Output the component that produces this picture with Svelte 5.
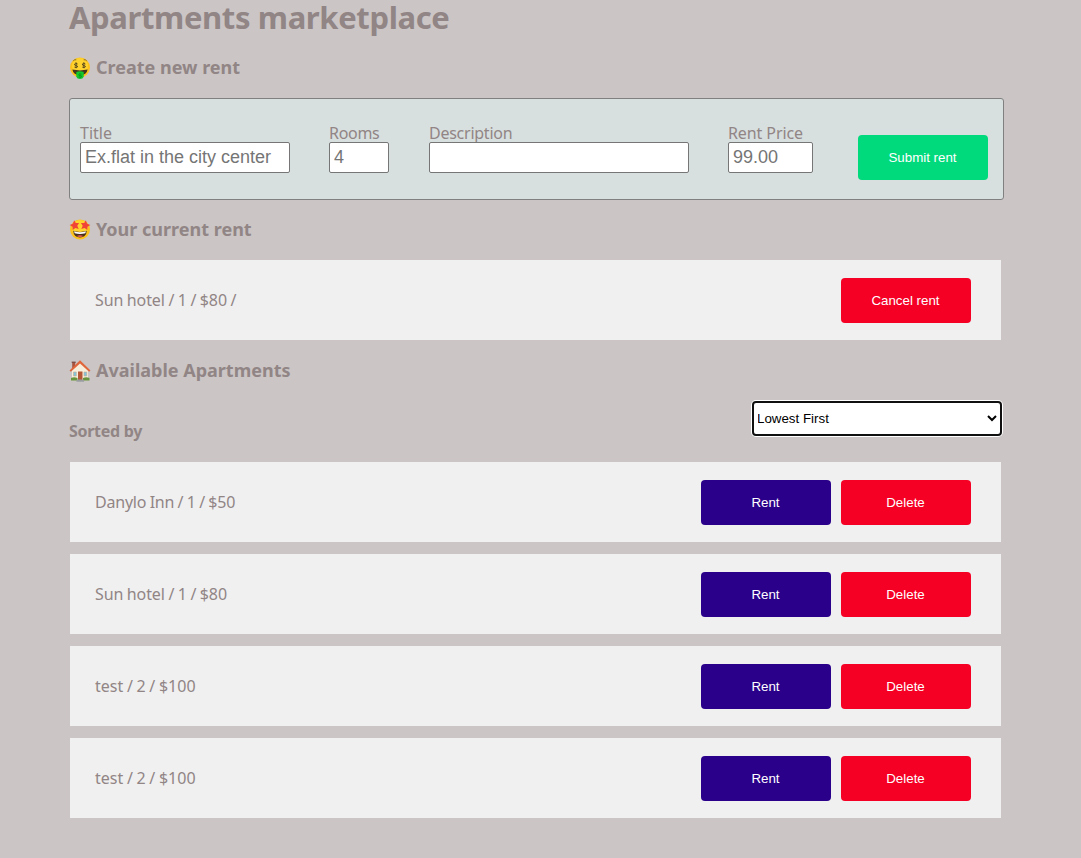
<script>
  const apartments = [
    { name: 'Danylo Inn', rooms: 1, price: 50, tracking: -0.22 },
    { name: 'Sun hotel', rooms: 1, price: 80, tracking: -0.1 },
    { name: 'test', rooms: 2, price: 100, tracking: 0 },
    { name: 'test', rooms: 2, price: 100, tracking: 0 }
  ];
</script>

<main>
  <h1>Apartments marketplace</h1>

  <h2>
    <svg class="emoji" viewBox="0 0 22 22" aria-hidden="true">
      <circle cx="11" cy="10.5" r="10" fill="#fcc21b" />
      <circle cx="11" cy="9" r="8" fill="#ffd22e" />
      <path d="M4.3 3.8q1.3-1.5 3-1M17.7 3.8q-1.3-1.5-3-1" fill="none" stroke="#80601b" stroke-width=".9" />
      <path d="M8.6 7Q6 5.6 5.6 7t1.7 1.6q1.6.3 1.2 1.4t-3 .1M7.1 5.4v5.8M16.4 7q-2.6-1.4-3 0t1.7 1.6q1.6.3 1.2 1.4t-3 .1M14.9 5.4v5.8" fill="none" stroke="#5b4a1c" stroke-width="1" />
      <path d="M3.4 12.6q7.6 1.6 15.2 0-.9 5.6-7.6 5.6t-7.6-5.6z" fill="#42351b" />
      <path d="M7.3 15q3.7-1.3 7.4 0v4.8q-.8 2.2-3.7 2.2t-3.7-2.2z" fill="#10c92b" />
      <path d="M12.4 17.2q-2.5-.8-2.6.3t1.4 1.1 1.2 1.1-2.6.3" fill="none" stroke="#087a1b" stroke-width=".8" />
    </svg>
    <span>Create new rent</span>
  </h2>

  <form onsubmit={(e) => e.preventDefault()}>
    <label class="title"><span>Title</span><input placeholder="Ex.flat in the city center" /></label>
    <label class="rooms"><span>Rooms</span><input placeholder="4" /></label>
    <label class="description"><span>Description</span><input /></label>
    <label class="price"><span>Rent Price</span><input placeholder="99.00" /></label>
    <button class="submit">Submit rent</button>
  </form>

  <h2>
    <svg class="emoji" viewBox="0 0 22 22" aria-hidden="true">
      <circle cx="11" cy="10.5" r="10" fill="#fcc21b" />
      <circle cx="11" cy="9" r="8" fill="#ffd22e" />
      <path d="M5.2 1.3l1.6 2.8 3.3-.2-1.8 2.8 1.4 3.2-3.3-.8-2.7 2-.2-3.4L.7 6l3.2-1.2zM16.8 1.3l-1.6 2.8-3.3-.2 1.8 2.8-1.4 3.2 3.3-.8 2.7 2 .2-3.4L21.3 6l-3.2-1.2z" fill="#f04438" />
      <path d="M4.2 11.8q6.8 2.2 13.6 0-.6 6.6-6.8 6.6t-6.8-6.6z" fill="#493219" />
      <path d="M5.1 12.3q5.9 1.7 11.8 0l-.5 2q-5.4 1.2-10.8 0z" fill="#fff" />
      <path d="M7.6 17q3.4-1.7 6.8 0-1.3 1-3.4 1t-3.4-1z" fill="#ed5b50" />
    </svg>
    <span>Your current rent</span>
  </h2>

  <section class="card">
    <p>Sun hotel / 1 / $80 /</p>
    <button class="danger">Cancel rent</button>
  </section>

  <h2>
    <svg class="emoji" viewBox="0 0 22 22" aria-hidden="true">
      <path d="M3.2 2.2h3v6h-3z" fill="#a9543e" />
      <path d="M2.7 1.6h4v1.3h-4z" fill="#7a4b43" />
      <path d="M3 10l8-8 8 8v10H3z" fill="#f7eedb" />
      <path d="M11 .3L.5 10.5l1.4 1.3L11 3.5l9.1 8.3 1.4-1.3z" fill="#e0663b" />
      <path d="M9 11.5h4.5V20H9z" fill="#b65735" />
      <path d="M4.5 12h2.8v4H4.5zM15 12h2.8v4H15z" fill="#82c4dc" stroke="#c8aa8b" stroke-width=".6" />
      <path d="M2 18q3-1.5 6.5 0v2.5H2zM14 18q3-1.5 6.5 0v2.5H14z" fill="#6a953f" />
      <path d="M8 19.5h6.5l.7 2.3H7.3z" fill="#9a9da0" />
    </svg>
    <span>Available Apartments</span>
  </h2>

  <div class="sort">
    <h3>Sorted by</h3>
    <select>
      <option>Lowest First</option>
      <option>Highest First</option>
    </select>
  </div>

  <div class="list">
    {#each apartments as a}
      <section class="card">
        <p style:letter-spacing="{a.tracking}px">{a.name} / {a.rooms} / ${a.price}</p>
        <button class="primary">Rent</button>
        <button class="danger">Delete</button>
      </section>
    {/each}
  </div>
</main>

<style>
  :global(body) {
    background: #cbc5c5;
  }
  main {
    box-sizing: border-box;
    width: 1004px;
    height: 858px;
    padding-left: 69px;
    color: #918585;
    font: 16px/18px "Noto Sans", "Open Sans", sans-serif;
  }
  h1,
  h2,
  h3,
  p {
    margin: 0;
    white-space: nowrap;
  }
  h1 {
    height: 57px;
    font-size: 31px;
    line-height: 34px;
    letter-spacing: -0.37px;
  }
  h2 {
    display: flex;
    align-items: center;
    gap: 5px;
    height: 22px;
    font-size: 18px;
    line-height: 20px;
  }
  h2 span {
    padding-bottom: 2px;
  }
  .emoji {
    width: 22px;
    height: 22px;
  }
  form {
    box-sizing: border-box;
    display: flex;
    width: 935px;
    height: 102px;
    margin: 19px 0;
    padding: 25px 0 0 10px;
    border: 1px solid #808080;
    border-radius: 3px;
    background: #d8dfdf;
  }
  label {
    display: flex;
    flex-direction: column;
  }
  input {
    box-sizing: border-box;
    height: 31px;
    padding: 1px 4px;
    border: 1px solid #767676;
    border-radius: 2px;
    background: #fff;
    font: 18px "Liberation Sans", sans-serif;
  }
  input::placeholder {
    color: #757575;
  }
  .title {
    width: 210px;
    margin-right: 39px;
  }
  .rooms {
    width: 60px;
    margin-right: 40px;
    letter-spacing: -0.3px;
  }
  .description {
    width: 260px;
    margin-right: 39px;
    letter-spacing: -0.25px;
  }
  .price {
    width: 85px;
    margin-right: 45px;
    letter-spacing: -0.1px;
  }
  button {
    width: 130px;
    height: 45px;
    padding: 0 1px 0 0;
    border: 0;
    border-radius: 4px;
    color: #fff;
    font: 13.333px "Liberation Sans", sans-serif;
  }
  .submit {
    margin-top: 11px;
    background: #00da7c;
  }
  .danger {
    background: #f50024;
  }
  .primary {
    background: #2a008a;
  }
  .card {
    box-sizing: border-box;
    display: flex;
    align-items: center;
    gap: 10px;
    width: 931px;
    height: 80px;
    margin-left: 1px;
    padding: 1px 30px 0 25px;
    background: #f0f0f0;
  }
  .card p {
    margin-right: auto;
    padding-bottom: 2px;
    letter-spacing: -0.1px;
    word-spacing: -0.5px;
  }
  form + h2 + .card {
    margin-top: 19px;
    margin-bottom: 20px;
  }
  .sort {
    display: flex;
    justify-content: space-between;
    width: 933px;
    height: 61px;
    margin-top: 19px;
  }
  h3 {
    margin-top: 21px;
    font-size: 16px;
    line-height: 18px;
    letter-spacing: -0.3px;
  }
  select {
    width: 250px;
    height: 35px;
    border: 2px solid #101010;
    border-radius: 4px;
    outline: 0;
    box-shadow: 0 0 0 1px #fff;
    background: #fff;
    color: #000;
    font: 13.333px "Liberation Sans", sans-serif;
    text-indent: -1px;
  }
  .list {
    display: grid;
    gap: 12px;
  }
</style>
